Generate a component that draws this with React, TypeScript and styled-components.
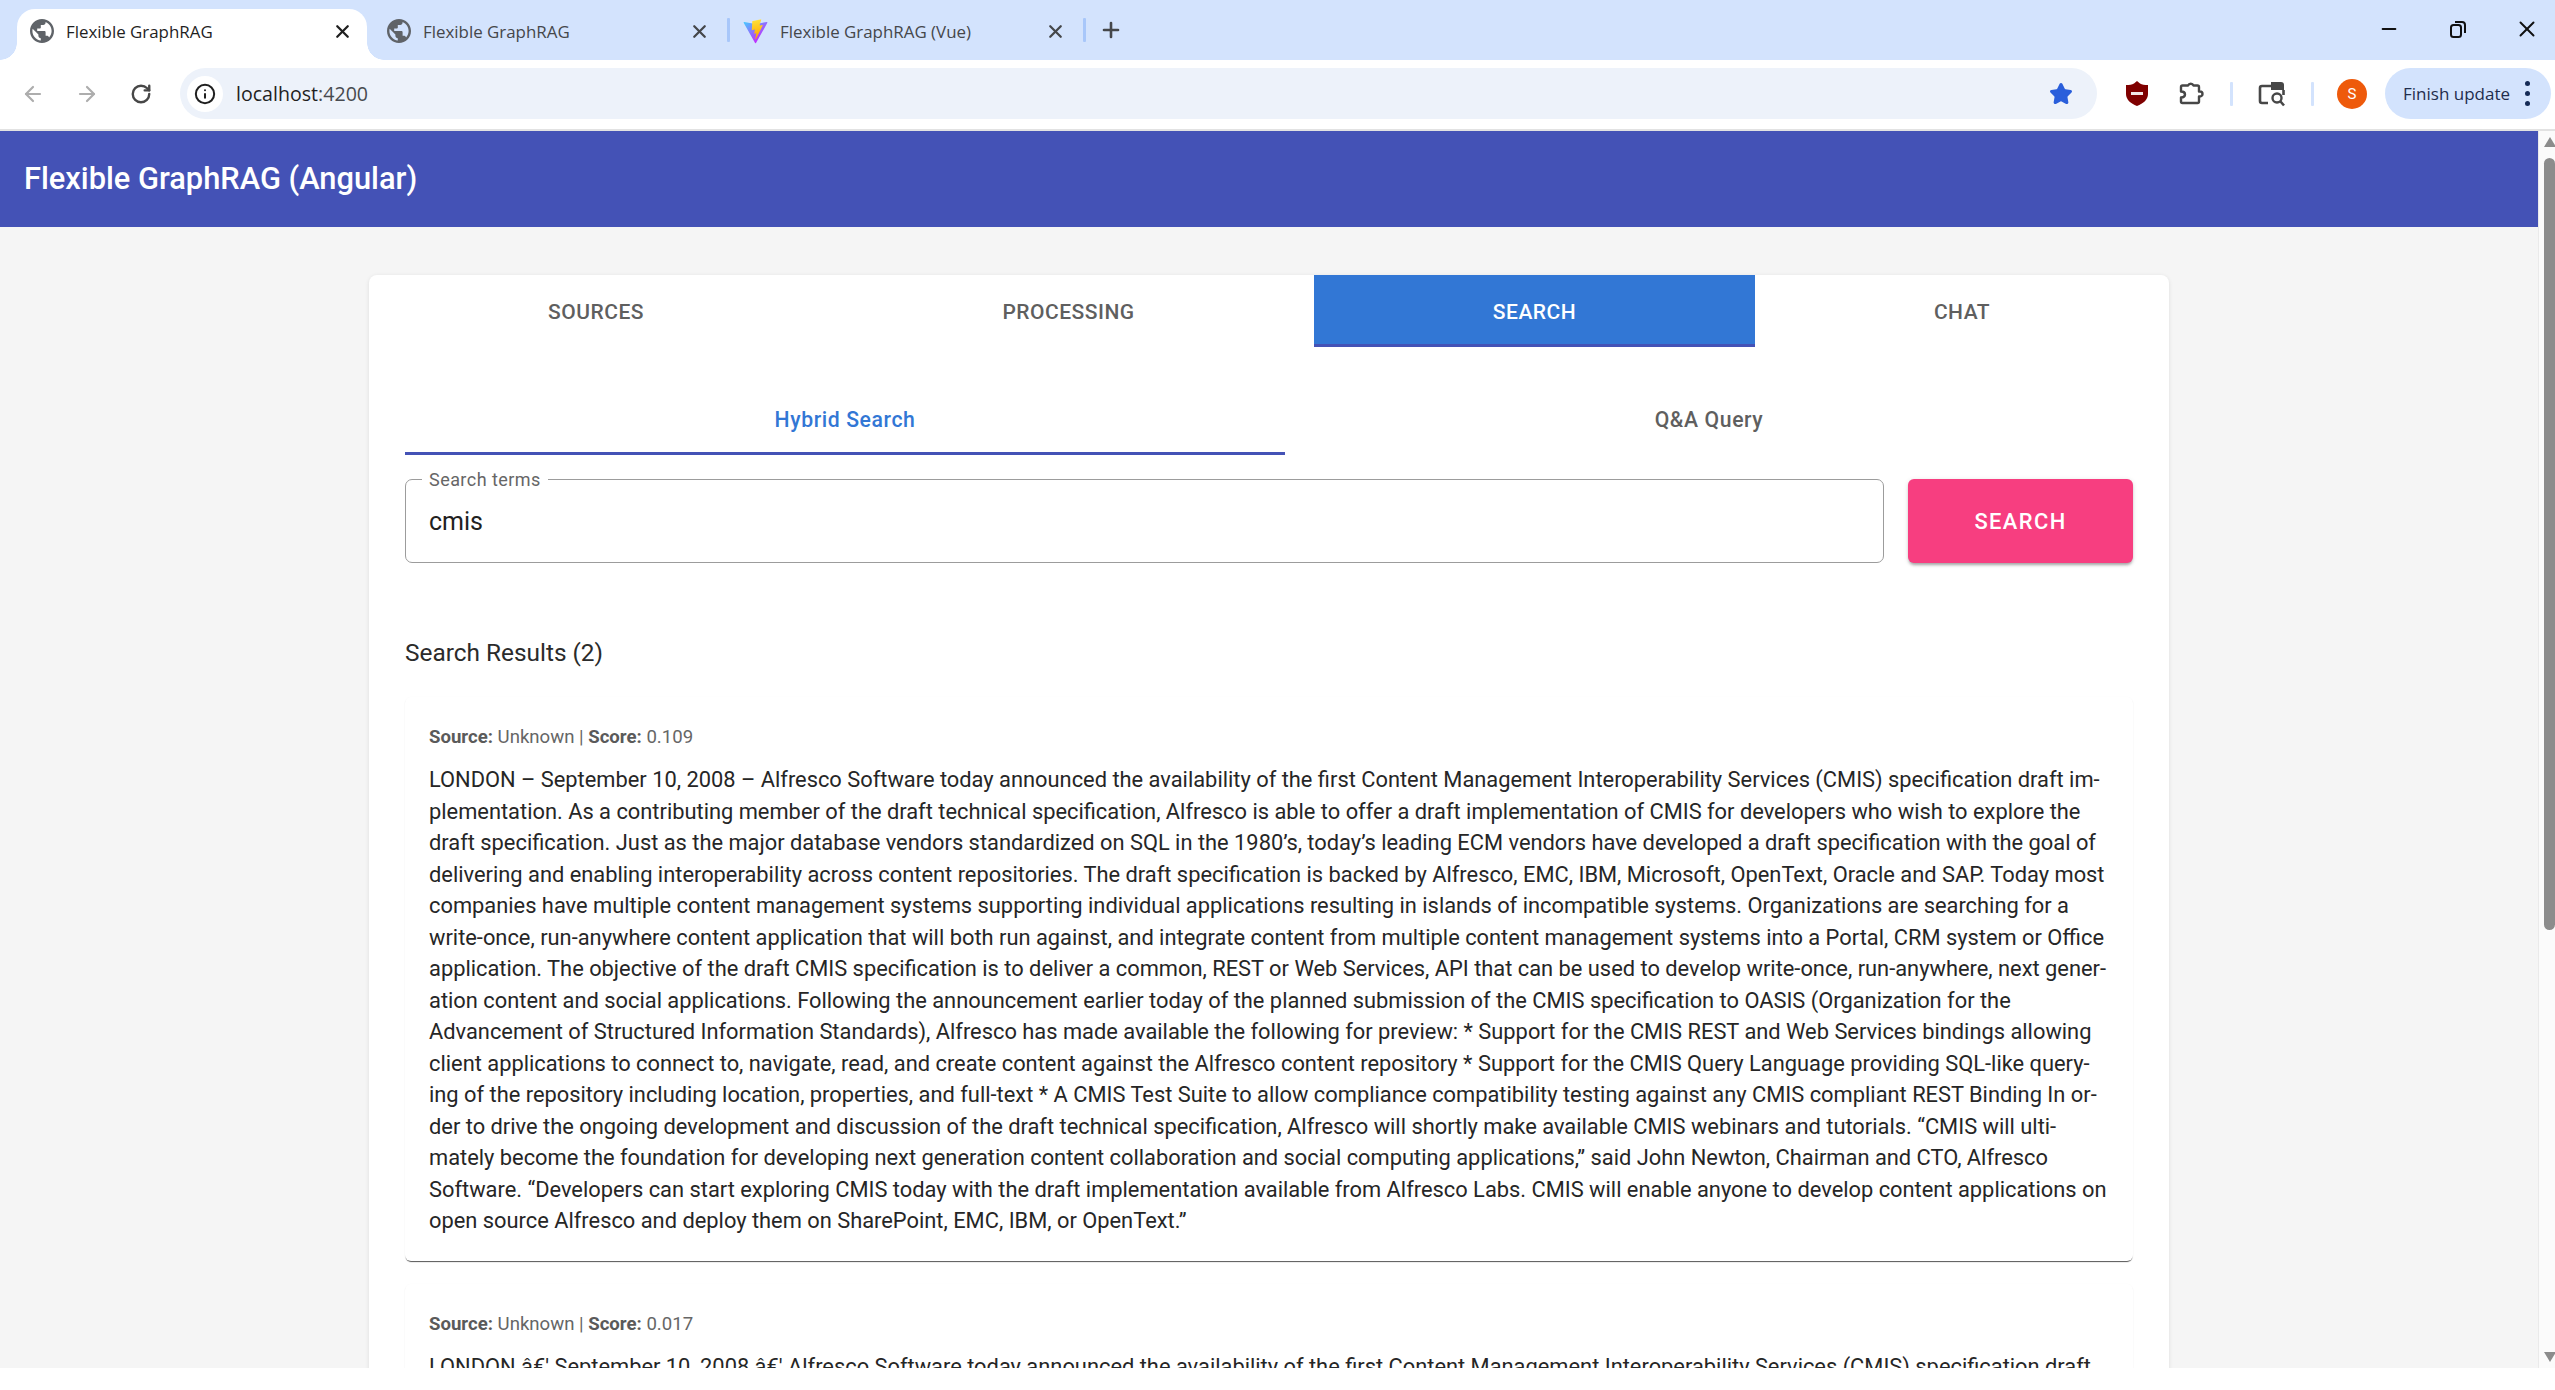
import React from 'react';
import styled, { createGlobalStyle } from 'styled-components';
import { ArrowLeft, ArrowRight, RotateCw, Info, X, Plus, Minus, Star } from 'lucide-react';

const GlobalStyle = createGlobalStyle`
	html, body {
		margin: 0;
		padding: 0;
		background: #fff;
		font-family: Roboto, sans-serif;
	}
	* {
		box-sizing: border-box;
	}
`;

const Screen = styled.div`
	width: 2555px;
	height: 1390px;
	overflow: hidden;
	display: flex;
	flex-direction: column;
	background: #fff;
`;

const TabStrip = styled.div`
	height: 60px;
	background: #d3e3fd;
	display: flex;
	align-items: flex-end;
	padding-left: 17px;
	font-family: 'Open Sans', sans-serif;
`;
const BrowserTab = styled.div<{ active?: boolean }>`
	position: relative;
	width: 350px;
	height: 51px;
	margin-right: 7px;
	padding: 0 14px 7px 13px;
	display: flex;
	align-items: center;
	gap: 12px;
	border-radius: 18px 18px 0 0;
	background: ${({ active }) => (active ? '#fff' : 'transparent')};
	color: ${({ active }) => (active ? '#1f1f1f' : '#45474a')};
	font-size: 16.9px;
	white-space: nowrap;
	&::before,
	&::after {
		content: '';
		display: ${({ active }) => (active ? 'block' : 'none')};
		position: absolute;
		bottom: 0;
		width: 17px;
		height: 17px;
	}
	&::before {
		left: -17px;
		background: radial-gradient(circle at 0 0, transparent 16.5px, #fff 17px);
	}
	&::after {
		right: -17px;
		background: radial-gradient(circle at 100% 0, transparent 16.5px, #fff 17px);
	}
`;
const TabTitle = styled.span`
	flex: 1;
`;
const TabDivider = styled.div`
	width: 3px;
	height: 24px;
	margin: 0 0 18px -4px;
	background: #a8c7fa;
	border-radius: 1px;
	flex: none;
`;
const NewTab = styled.div`
	width: 50px;
	height: 42px;
	margin-bottom: 9px;
	display: flex;
	align-items: center;
	justify-content: center;
	color: #45474a;
`;
const WindowControls = styled.div`
	margin-left: auto;
	align-self: flex-start;
	height: 58px;
	padding-right: 13px;
	display: flex;
	align-items: center;
	gap: 39px;
	color: #111;
`;
const WindowButton = styled.div`
	width: 30px;
	height: 30px;
	display: flex;
	align-items: center;
	justify-content: center;
`;

const Toolbar = styled.div`
	height: 71px;
	padding: 0 4px 2px 6px;
	display: flex;
	align-items: center;
	background: #fff;
	border-bottom: 2px solid #e2e2e2;
`;
const NavButton = styled.div<{ dim?: boolean }>`
	width: 54px;
	flex: none;
	display: flex;
	justify-content: center;
	color: ${({ dim }) => (dim ? '#adadad' : '#474747')};
`;
const Omnibox = styled.div`
	width: 1917px;
	flex: none;
	height: 51px;
	margin-left: 12px;
	padding: 0 24px 0 7px;
	display: flex;
	align-items: center;
	background: #edf2fa;
	border-radius: 26px;
`;
const SiteChip = styled.div`
	width: 36px;
	height: 36px;
	border-radius: 50%;
	background: #fff;
	color: #1f1f1f;
	display: flex;
	align-items: center;
	justify-content: center;
`;
const Url = styled.div`
	flex: 1;
	margin-left: 13px;
	font-family: 'Open Sans', sans-serif;
	font-size: 19.6px;
	color: #1f1f1f;
	span {
		color: #474a4f;
	}
`;
const ToolbarIcon = styled.div<{ width: number }>`
	width: ${({ width }) => width}px;
	display: flex;
	justify-content: center;
	flex: none;
`;
const ToolbarSep = styled.div`
	width: 3px;
	height: 24px;
	background: #d3e3fd;
	border-radius: 1px;
	flex: none;
`;
const Avatar = styled.div`
	width: 30px;
	height: 30px;
	margin-left: 23px;
	flex: none;
	border-radius: 50%;
	background: #ee5a0b;
	color: #fff;
	font-size: 15px;
	display: flex;
	align-items: center;
	justify-content: center;
`;
const UpdatePill = styled.div`
	width: 166px;
	height: 51px;
	margin-left: 18px;
	padding-left: 18px;
	flex: none;
	display: flex;
	align-items: center;
	border-radius: 26px;
	background: #d3e3fd;
	color: #1f2d4d;
	font-family: 'Open Sans', sans-serif;
	font-size: 17px;
	white-space: nowrap;
`;
const MoreDots = styled.div`
	margin-left: 15px;
	display: flex;
	flex-direction: column;
	gap: 5px;
	i {
		width: 5px;
		height: 5px;
		border-radius: 50%;
		background: #142a55;
	}
`;

const Viewport = styled.div`
	height: 1237px;
	display: flex;
`;
const Page = styled.div`
	flex: 1;
	min-width: 0;
	overflow: hidden;
	background: #f5f5f5;
`;
const AppHeader = styled.div`
	height: 96px;
	padding: 0 24px 1px;
	display: flex;
	align-items: center;
	background: #4452b6;
	color: #fff;
	font-size: 30.8px;
	font-weight: 500;
`;
const Card = styled.div`
	width: 1800px;
	margin: 48px auto 0;
	padding-bottom: 40px;
	background: #fff;
	border-radius: 8px;
	box-shadow: 0 1px 4px rgba(0, 0, 0, 0.1);
`;
const MainTabs = styled.div`
	display: grid;
	grid-template-columns: 454px 491px 441px 414px;
	height: 72px;
`;
const MainTab = styled.div<{ active?: boolean }>`
	display: flex;
	align-items: center;
	justify-content: center;
	padding-top: 4px;
	font-size: 21px;
	font-weight: 500;
	letter-spacing: 0.5px;
	background: ${({ active }) => (active ? '#3277d5' : 'transparent')};
	color: ${({ active }) => (active ? '#fff' : '#5f5f5f')};
	border-bottom: 3px solid ${({ active }) => (active ? '#4452b6' : 'transparent')};
`;
const CardBody = styled.div`
	padding: 36px 36px 0;
`;
const SubTabs = styled.div`
	display: grid;
	grid-template-columns: 880px 1fr;
	height: 72px;
`;
const SubTab = styled.div<{ active?: boolean }>`
	display: flex;
	align-items: center;
	justify-content: center;
	padding-top: 4px;
	font-size: 21.2px;
	font-weight: 500;
	letter-spacing: 0.6px;
	color: ${({ active }) => (active ? '#3277d5' : '#5f5f5f')};
	border-bottom: 3px solid ${({ active }) => (active ? '#4452b6' : 'transparent')};
`;
const SearchRow = styled.div`
	margin-top: 24px;
	display: flex;
	gap: 24px;
	height: 84px;
`;
const SearchField = styled.div`
	position: relative;
	flex: 1;
	display: flex;
	align-items: center;
	padding: 0 23px;
	border: 1.5px solid #9c9c9c;
	border-radius: 7px;
	font-size: 25px;
	color: #212121;
`;
const FieldLabel = styled.span`
	position: absolute;
	top: -11px;
	left: 16px;
	padding: 0 7px;
	background: #fff;
	font-size: 18px;
	letter-spacing: 0.45px;
	color: #666;
`;
const SearchButton = styled.div`
	width: 225px;
	display: flex;
	align-items: center;
	justify-content: center;
	border-radius: 6px;
	background: #f73e80;
	color: #fff;
	font-size: 21.9px;
	font-weight: 500;
	letter-spacing: 1.4px;
	box-shadow: 0 3px 3px -1px rgba(0, 0, 0, 0.3), 0 1px 5px rgba(0, 0, 0, 0.12);
`;
const ResultsTitle = styled.div`
	margin: 70px 0 0;
	height: 41px;
	line-height: 40px;
	font-size: 24.4px;
	color: #2b2b2b;
`;
const ResultCard = styled.div`
	margin-top: 23px;
	padding: 24px 24px 24px;
	border-radius: 6px;
	background: #fff;
	box-shadow: 0 2px 1px -1px rgba(0, 0, 0, 0.6), 0 1px 1px rgba(0, 0, 0, 0.14), 0 0 2px rgba(0, 0, 0, 0.02);
`;
const Meta = styled.div`
	height: 32px;
	line-height: 32px;
	font-size: 18.6px;
	color: #666;
	b {
		color: #5a5a5a;
		font-weight: 700;
	}
`;
const ResultText = styled.div`
	margin-top: 11px;
	font-size: 21.85px;
	line-height: 31.5px;
	color: #262626;
	white-space: nowrap;
`;

const Scrollbar = styled.div`
	width: 17px;
	padding: 6px 0 6px 5px;
	display: flex;
	flex-direction: column;
	background: #fbfbfb;
	border-left: 1px solid #eaeaea;
`;
const ScrollArrow = styled.div<{ down?: boolean }>`
	width: 0;
	height: 0;
	border-left: 6px solid transparent;
	border-right: 6px solid transparent;
	${({ down }) => (down ? 'border-top' : 'border-bottom')}: 10px solid #8c8c8c;
	${({ down }) => (down ? 'margin-top: auto;' : '')}
`;
const ScrollThumb = styled.div`
	height: 772px;
	margin-top: 11px;
	background: #8c8c8c;
	border-radius: 6px;
`;
const BottomStrip = styled.div`
	height: 22px;
	background: #fff;
`;

const Globe = () => (
	<svg width='24' height='24' viewBox='2 2 20 20' fill='#5f6368'>
		<path d='M12 2C6.48 2 2 6.48 2 12s4.48 10 10 10 10-4.48 10-10S17.52 2 12 2zm-1 17.93c-3.95-.49-7-3.85-7-7.93 0-.62.08-1.21.21-1.79L9 15v1c0 1.1.9 2 2 2v1.93zm6.9-2.54c-.26-.81-1-1.39-1.9-1.39h-1v-3c0-.55-.45-1-1-1H8v-2h2c.55 0 1-.45 1-1V7h2c1.1 0 2-.9 2-2v-.41c2.93 1.19 5 4.06 5 7.41 0 2.08-.8 3.97-2.1 5.39z' />
	</svg>
);

const ViteLogo = () => (
	<svg width='25' height='25' viewBox='0 0 410 404' fill='none'>
		<path
			d='M399.641 59.5246L215.643 388.545C211.844 395.338 202.084 395.378 198.228 388.618L10.5817 59.5563C6.38087 52.1896 12.6802 43.2665 21.0281 44.7586L205.223 77.6824C206.398 77.8924 207.601 77.8904 208.776 77.6763L389.119 44.8058C397.439 43.2894 403.768 52.1434 399.641 59.5246Z'
			fill='url(#viteA)'
		/>
		<path
			d='M292.965 1.5744L156.801 28.2552C154.563 28.6937 152.906 30.5903 152.771 32.8664L144.395 174.33C144.198 177.662 147.258 180.248 150.51 179.498L188.42 170.749C191.967 169.931 195.172 173.055 194.443 176.622L183.18 231.775C182.422 235.487 185.907 238.661 189.532 237.56L212.947 230.446C216.577 229.344 220.065 232.527 219.297 236.242L201.398 322.875C200.278 328.294 207.486 331.249 210.492 326.603L212.5 323.5L323.454 102.072C325.312 98.3645 322.108 94.137 318.036 94.9228L279.014 102.454C275.347 103.161 272.227 99.746 273.262 96.1583L298.731 7.86689C299.767 4.27314 296.636 0.855181 292.965 1.5744Z'
			fill='url(#viteB)'
		/>
		<defs>
			<linearGradient id='viteA' x1='6' y1='33' x2='235' y2='344' gradientUnits='userSpaceOnUse'>
				<stop stopColor='#41D1FF' />
				<stop offset='1' stopColor='#BD34FE' />
			</linearGradient>
			<linearGradient id='viteB' x1='194' y1='8' x2='236' y2='293' gradientUnits='userSpaceOnUse'>
				<stop stopColor='#FFEA83' />
				<stop offset='0.08' stopColor='#FFDD35' />
				<stop offset='1' stopColor='#FFA800' />
			</linearGradient>
		</defs>
	</svg>
);

const Shield = () => (
	<svg width='22' height='25' viewBox='0 0 22 25'>
		<path d='M11 0l3 2.5c2 1 4.500 1.500 8 1.500v9c0 5.500-4.500 9.500-11 12C4.500 22.500 0 18.500 0 13V4c3.500 0 6-.5 8-1.500z' fill='#7f0000' />
		<rect x='5' y='11' width='12' height='3' fill='#f2e6e6' />
	</svg>
);

// chrome's puzzle piece: knob on top and right, notch on the left
const Extensions = () => (
	<svg width='26' height='26' viewBox='0 0 26 26' fill='none' stroke='#474747' strokeWidth='2.4' strokeLinejoin='round'>
		<path d='M2 6a1.500 1.500 0 0 1 1.500-1.500h5.500a3 3 0 0 1 5.500 0h4a1.500 1.500 0 0 1 1.500 1.500v4.500h1a2.500 2.500 0 0 1 0 5h-1v5a1.500 1.500 0 0 1-1.500 1.500H3.500a1.500 1.500 0 0 1-1.500-1.500v-4c3 0 4-1.500 4-3s-1-3-4-3z' />
	</svg>
);

const TabSearch = () => (
	<svg width='28' height='26' viewBox='0 0 28 26' fill='none'>
		<path d='M14 5H4a2 2 0 0 0-2 2v13a2 2 0 0 0 2 2h6' stroke='#474747' strokeWidth='2.6' />
		<path d='M13 1h10a3 3 0 0 1 3 3v5H13z' fill='#474747' />
		<circle cx='19' cy='17' r='4.500' stroke='#474747' strokeWidth='2.4' />
		<path d='M22.500 20.500L26 24.500' stroke='#474747' strokeWidth='2.6' />
		<path d='M25.500 9v5' stroke='#474747' strokeWidth='2.6' />
	</svg>
);

const RESULT_LINES = [
	'LONDON – September 10, 2008 – Alfresco Software today announced the availability of the first Content Management Interoperability Services (CMIS) specification draft im-',
	'plementation. As a contributing member of the draft technical specification, Alfresco is able to offer a draft implementation of CMIS for developers who wish to explore the',
	'draft specification. Just as the major database vendors standardized on SQL in the 1980’s, today’s leading ECM vendors have developed a draft specification with the goal of',
	'delivering and enabling interoperability across content repositories. The draft specification is backed by Alfresco, EMC, IBM, Microsoft, OpenText, Oracle and SAP. Today most',
	'companies have multiple content management systems supporting individual applications resulting in islands of incompatible systems. Organizations are searching for a',
	'write-once, run-anywhere content application that will both run against, and integrate content from multiple content management systems into a Portal, CRM system or Office',
	'application. The objective of the draft CMIS specification is to deliver a common, REST or Web Services, API that can be used to develop write-once, run-anywhere, next gener-',
	'ation content and social applications. Following the announcement earlier today of the planned submission of the CMIS specification to OASIS (Organization for the',
	'Advancement of Structured Information Standards), Alfresco has made available the following for preview: * Support for the CMIS REST and Web Services bindings allowing',
	'client applications to connect to, navigate, read, and create content against the Alfresco content repository * Support for the CMIS Query Language providing SQL-like query-',
	'ing of the repository including location, properties, and full-text * A CMIS Test Suite to allow compliance compatibility testing against any CMIS compliant REST Binding In or-',
	'der to drive the ongoing development and discussion of the draft technical specification, Alfresco will shortly make available CMIS webinars and tutorials. “CMIS will ulti-',
	'mately become the foundation for developing next generation content collaboration and social computing applications,” said John Newton, Chairman and CTO, Alfresco',
	'Software. “Developers can start exploring CMIS today with the draft implementation available from Alfresco Labs. CMIS will enable anyone to develop content applications on',
	'open source Alfresco and deploy them on SharePoint, EMC, IBM, or OpenText.”',
];

const SECOND_RESULT_LINE =
	"LONDON â€' September 10, 2008 â€' Alfresco Software today announced the availability of the first Content Management Interoperability Services (CMIS) specification draft";

const App = () => {
	return (
		<Screen>
			<GlobalStyle />
			<TabStrip>
				<BrowserTab active>
					<Globe />
					<TabTitle>Flexible GraphRAG</TabTitle>
					<X size={21} strokeWidth={2.6} color='#1f1f1f' />
				</BrowserTab>
				<BrowserTab>
					<Globe />
					<TabTitle>Flexible GraphRAG</TabTitle>
					<X size={21} strokeWidth={2.6} color='#45474a' />
				</BrowserTab>
				<TabDivider />
				<BrowserTab>
					<ViteLogo />
					<TabTitle>Flexible GraphRAG (Vue)</TabTitle>
					<X size={21} strokeWidth={2.6} color='#45474a' />
				</BrowserTab>
				<TabDivider />
				<NewTab>
					<Plus size={24} strokeWidth={2.6} />
				</NewTab>
				<WindowControls>
					<WindowButton>
						<Minus size={22} strokeWidth={2} />
					</WindowButton>
					<WindowButton>
						<svg width='18' height='18' viewBox='0 0 18 18' fill='none' stroke='#111' strokeWidth='2'>
							<rect x='2' y='5' width='10' height='12' rx='2.500' />
							<path d='M6 2h7a3 3 0 0 1 3 3v8' />
						</svg>
					</WindowButton>
					<WindowButton>
						<X size={26} strokeWidth={1.8} />
					</WindowButton>
				</WindowControls>
			</TabStrip>
			<Toolbar>
				<NavButton dim>
					<ArrowLeft size={24} strokeWidth={2.2} />
				</NavButton>
				<NavButton dim>
					<ArrowRight size={24} strokeWidth={2.2} />
				</NavButton>
				<NavButton>
					<RotateCw size={22} strokeWidth={2.6} />
				</NavButton>
				<Omnibox>
					<SiteChip>
						<Info size={22} strokeWidth={2.2} />
					</SiteChip>
					<Url>
						localhost<span>:4200</span>
					</Url>
					<Star size={24} fill='#2a5fdb' color='#2a5fdb' />
				</Omnibox>
				<ToolbarIcon width={80}>
					<Shield />
				</ToolbarIcon>
				<ToolbarIcon width={30}>
					<Extensions />
				</ToolbarIcon>
				<ToolbarIcon width={23} />
				<ToolbarSep />
				<ToolbarIcon width={78}>
					<TabSearch />
				</ToolbarIcon>
				<ToolbarSep />
				<Avatar>S</Avatar>
				<UpdatePill>
					Finish update
					<MoreDots>
						<i />
						<i />
						<i />
					</MoreDots>
				</UpdatePill>
			</Toolbar>
			<Viewport>
				<Page>
					<AppHeader>Flexible GraphRAG (Angular)</AppHeader>
					<Card>
						<MainTabs>
							<MainTab>SOURCES</MainTab>
							<MainTab>PROCESSING</MainTab>
							<MainTab active>SEARCH</MainTab>
							<MainTab>CHAT</MainTab>
						</MainTabs>
						<CardBody>
							<SubTabs>
								<SubTab active>Hybrid Search</SubTab>
								<SubTab>Q&amp;A Query</SubTab>
							</SubTabs>
							<SearchRow>
								<SearchField>
									<FieldLabel>Search terms</FieldLabel>
									cmis
								</SearchField>
								<SearchButton>SEARCH</SearchButton>
							</SearchRow>
							<ResultsTitle>Search Results (2)</ResultsTitle>
							<ResultCard>
								<Meta>
									<b>Source:</b> Unknown | <b>Score:</b> 0.109
								</Meta>
								<ResultText>
									{RESULT_LINES.map(line => (
										<div key={line}>{line}</div>
									))}
								</ResultText>
							</ResultCard>
							<ResultCard>
								<Meta>
									<b>Source:</b> Unknown | <b>Score:</b> 0.017
								</Meta>
								<ResultText>
									<div>{SECOND_RESULT_LINE}</div>
								</ResultText>
							</ResultCard>
						</CardBody>
					</Card>
				</Page>
				<Scrollbar>
					<ScrollArrow />
					<ScrollThumb />
					<ScrollArrow down />
				</Scrollbar>
			</Viewport>
			<BottomStrip />
		</Screen>
	);
};

export default App;
